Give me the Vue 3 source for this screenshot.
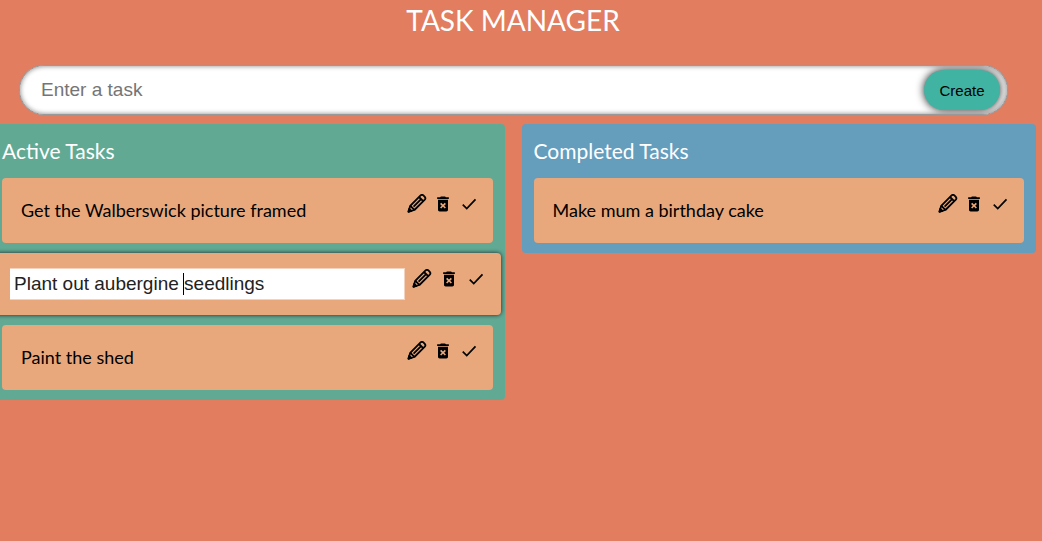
<script setup>
import { ref, onMounted } from 'vue'

const newTask = ref('')
const editField = ref(null)
const columns = ref([
  {
    id: 'active',
    title: 'Active Tasks',
    tasks: [
      { id: 1, text: 'Get the Walberswick picture framed', editing: false },
      { id: 2, text: 'Plant out aubergine seedlings', editing: true },
      { id: 3, text: 'Paint the shed', editing: false },
    ],
  },
  {
    id: 'completed',
    title: 'Completed Tasks',
    tasks: [{ id: 4, text: 'Make mum a birthday cake', editing: false }],
  },
])

function create() {
  const text = newTask.value.trim()
  if (!text) return
  columns.value[0].tasks.push({ id: Date.now(), text, editing: false })
  newTask.value = ''
}

function remove(column, task) {
  column.tasks = column.tasks.filter((t) => t.id !== task.id)
}

function move(column, task) {
  const other = columns.value.find((c) => c.id !== column.id)
  remove(column, task)
  other.tasks.push({ ...task, editing: false })
}

onMounted(() => {
  const field = editField.value?.[0]
  if (field) {
    field.focus()
    field.setSelectionRange(20, 20)
  }
})
</script>

<template>
  <main class="app">
    <h1 class="title">TASK MANAGER</h1>

    <form class="create" @submit.prevent="create">
      <input v-model="newTask" class="create-input" type="text" placeholder="Enter a task" aria-label="New task" />
      <button class="create-button" type="submit">Create</button>
    </form>

    <div class="board">
      <section v-for="column in columns" :key="column.id" class="column" :class="column.id">
        <h2 class="column-title">{{ column.title }}</h2>
        <ul class="tasks">
          <li v-for="task in column.tasks" :key="task.id" class="task" :class="{ editing: task.editing }">
            <div v-if="task.editing" class="field">
              <input ref="editField" v-model="task.text" class="task-input" type="text" aria-label="Task text" />
              <span class="caret"></span>
            </div>
            <span v-else class="task-text">{{ task.text }}</span>
            <div class="actions">
              <button type="button" aria-label="Edit" @click="task.editing = !task.editing">
                <svg viewBox="0 0 20 20" fill="none" stroke="currentColor" stroke-width="1.8" stroke-linejoin="round">
                  <path d="M1.6 17.6 3.2 11.8 13.6 1.4Q15 .2 16.4 1.4L17.8 2.8Q19 4.2 17.8 5.6L7.4 16Z" />
                  <path d="M12 3 16.2 7.2M3.4 11.8 7.4 15.8M6.6 12.6 13.6 5.6" />
                  <path d="M1.4 17.8 2.2 14.8 4.4 17Z" fill="currentColor" />
                </svg>
              </button>
              <button type="button" aria-label="Delete" @click="remove(column, task)">
                <svg viewBox="0 0 24 24" fill="currentColor">
                  <path
                    d="M6 19c0 1.1.9 2 2 2h8c1.1 0 2-.9 2-2V7H6v12zm2.46-7.12 1.41-1.41L12 12.59l2.12-2.12 1.41 1.41L13.41 14l2.12 2.12-1.41 1.41L12 15.41l-2.12 2.12-1.41-1.41L10.59 14l-2.13-2.12zM15.5 4l-1-1h-5l-1 1H5v2h14V4z"
                  />
                </svg>
              </button>
              <button type="button" aria-label="Toggle complete" @click="move(column, task)">
                <svg viewBox="0 0 24 24" fill="none" stroke="currentColor" stroke-width="2">
                  <path d="M4.5 12.8 9.3 17.6 19.8 6.4" />
                </svg>
              </button>
            </div>
          </li>
        </ul>
      </section>
    </div>
  </main>
</template>

<style>
body {
  background: #e27d60;
  overflow-x: hidden;
}
</style>

<style scoped>
.app {
  font-family: Lato, 'Liberation Sans', sans-serif;
  color: #000;
}

.title {
  margin: 0 16px 0 0;
  padding: 0 0 25px;
  font-size: 28px;
  line-height: 40px;
  font-weight: 400;
  text-align: center;
  color: #fff;
}

.create {
  display: flex;
  align-items: center;
  box-sizing: border-box;
  height: 50px;
  margin: 0 34px 9px 19px;
  padding: 0 7px 0 21px;
  border: 1px solid #999;
  border-radius: 25px;
  background: #fff;
  box-shadow: inset 0 0 5px #888, 0 0 1px #999;
  overflow: hidden;
}

.create-input {
  flex: 1;
  min-width: 0;
  padding: 0;
  border: 0;
  outline: 0;
  background: transparent;
  font: 19px 'Liberation Sans', Arial, sans-serif;
}

.create-input::placeholder {
  color: #757575;
}

.create-button {
  width: 76px;
  height: 40px;
  padding: 0;
  border: 0;
  border-radius: 20px;
  background: #41b3a3;
  color: #000;
  font: 15px 'Liberation Sans', Arial, sans-serif;
  box-shadow: 0 0 9px #222;
}

.board {
  display: grid;
  grid-template-columns: 1fr 1fr;
  align-items: start;
  gap: 17px;
  margin: 0 6px 0 -10px;
}

.column {
  padding: 11px 12px 10px;
  border-radius: 4px;
}

.active {
  background: #62a994;
}

.completed {
  background: #659dbd;
}

.column-title {
  margin: 0 0 11px;
  font-size: 21px;
  line-height: 32px;
  font-weight: 400;
  color: #fff;
}

.tasks {
  display: grid;
  gap: 10px;
  margin: 0;
  padding: 0;
  list-style: none;
}

.task {
  display: flex;
  justify-content: space-between;
  box-sizing: border-box;
  min-height: 65px;
  padding: 16px 14px 16px 19px;
  border-radius: 4px;
  background: #e8a87c;
}

.task-text {
  font-size: 18px;
  line-height: 33px;
}

.task.editing {
  min-height: 62px;
  margin: 0 -8px;
  padding: 15px 15px 15px 16px;
  gap: 7px;
  box-shadow: 0 0 4px #222;
}

.field {
  position: relative;
  flex: 1;
  min-width: 0;
}

.task-input {
  display: block;
  box-sizing: border-box;
  width: 100%;
  height: 32px;
  padding: 0 4px;
  border: 1px solid #f3d3bd;
  border-left: 0;
  outline: 0;
  background: #fff;
  color: #222;
  caret-color: transparent;
  font: 19px 'Liberation Sans', Arial, sans-serif;
}

.caret {
  position: absolute;
  top: 5px;
  left: 173px;
  width: 1px;
  height: 22px;
  background: #000;
  pointer-events: none;
}

.actions {
  display: flex;
  gap: 6px;
}

.editing .actions {
  gap: 7px;
  padding-top: 1px;
}

.actions button {
  display: block;
  width: 20px;
  height: 20px;
  padding: 0;
  border: 0;
  background: none;
  color: #000;
}

.actions svg {
  display: block;
  width: 20px;
  height: 20px;
}
</style>
